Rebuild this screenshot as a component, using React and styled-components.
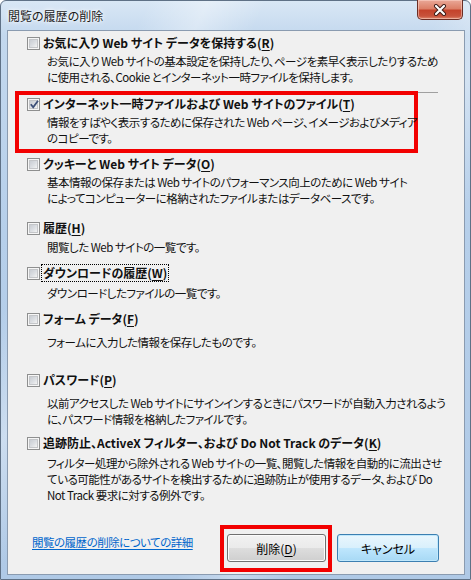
import React from "react";
import styled, { createGlobalStyle } from "styled-components";

const GlobalStyle = createGlobalStyle`
  html, body {
    margin: 0;
    padding: 0;
    width: 471px;
    height: 580px;
    overflow: hidden;
    background: #fff;
  }
  * {
    box-sizing: border-box;
  }
`;

const FONT = `"Noto Sans CJK JP", "Noto Sans", sans-serif`;

const Window = styled.div`
  width: 471px;
  height: 580px;
  display: flex;
  flex-direction: column;
  border: 1px solid #5f7186;
  border-radius: 6px 6px 0 0;
  background:
    linear-gradient(115deg, rgba(255,255,255,0) 20%, rgba(255,255,255,0.35) 28%, rgba(255,255,255,0) 36%, rgba(255,255,255,0) 60%, rgba(255,255,255,0.3) 68%, rgba(255,255,255,0) 76%),
    linear-gradient(180deg, #d9e7f5 0%, #c3d8ee 6%, #b6cfea 40%, #afc9e6 100%);
  font-family: ${FONT};
  font-feature-settings: "palt";
  color: #000;
`;

const TitleBar = styled.div`
  height: 29px;
  display: flex;
  justify-content: space-between;
  align-items: flex-start;
  padding-left: 7px;
  padding-right: 7px;
`;

const Title = styled.div`
  margin-top: 7px;
  font-size: 12px;
  line-height: 16px;
  color: #1a1a1a;
  text-shadow: 0 0 6px #fff, 0 0 3px #fff;
`;

const CloseButton = styled.div`
  width: 46px;
  height: 20px;
  margin-top: -1px;
  border: 1px solid #6b2d24;
  border-top: none;
  border-radius: 0 0 5px 5px;
  background: linear-gradient(180deg, #e9a898 0%, #dc8068 45%, #c4432c 55%, #c8533c 85%, #df8a70 100%);
  box-shadow: inset 0 0 0 1px rgba(255, 220, 210, 0.5);
  display: flex;
  align-items: center;
  justify-content: center;
`;

const Client = styled.div`
  flex: 1;
  margin: 0 5px 4px 6px;
  border: 1px solid #8a9bb0;
  background: #f0f0f0;
  padding-top: 4px;
  display: flex;
  flex-direction: column;
`;

const Item = styled.div`
  margin-top: ${(p) => p.$mt || 0}px;
  padding-left: ${(p) => p.$indent}px;
`;

const LabelRow = styled.div`
  display: flex;
  align-items: center;
  height: 16px;
  gap: 3px;
`;

const Label = styled.span`
  font-size: 12px;
  line-height: 16px;
  font-weight: 700;
  white-space: nowrap;
  padding: 0 1px;
  margin-left: -1px;
  color: #111;
  outline: ${(p) => (p.$focus ? "1px dotted #000" : "none")};
  outline-offset: 0px;
`;

const Key = styled.u`
  text-underline-offset: 2px;
`;

const Desc = styled.div`
  margin-top: ${(p) => p.$mt || 2}px;
  padding-left: 20px;
  font-size: 11.5px;
  letter-spacing: -0.5px;
  line-height: 16px;
  white-space: nowrap;
  color: #111;
`;

const BoxWrap = styled.div`
  width: 13px;
  height: 13px;
  flex: none;
  border: 1px solid #8e8f8f;
  background: #f6f6f6;
  padding: 1px;
`;

const BoxInner = styled.div`
  width: 100%;
  height: 100%;
  border: 1px solid #c4c6c9;
  background: linear-gradient(135deg, #c9cdd3 0%, #dcdfe3 55%, #f3f3f3 100%);
  position: relative;
`;

const Separator = styled.div`
  margin-top: 7px;
  margin-left: 12px;
  width: 418px;
  height: 1px;
  background: #a0a0a0;
`;

const Highlight = styled.div`
  margin-top: ${(p) => p.$mt || 0}px;
  margin-left: ${(p) => p.$ml || 0}px;
  border: 4px solid #f20000;
  padding: ${(p) => p.$pad};
  width: ${(p) => p.$w}px;
`;

const Footer = styled.div`
  margin-top: 22px;
  display: flex;
  align-items: flex-start;
  padding-left: 24px;
  padding-right: 25px;
`;

const HelpLink = styled.a`
  margin-top: 9px;
  font-size: 11.5px;
  letter-spacing: -0.5px;
  line-height: 16px;
  color: #0066cc;
  text-decoration: underline;
  text-underline-offset: 2px;
  cursor: pointer;
  white-space: nowrap;
`;

const Buttons = styled.div`
  margin-left: auto;
  display: flex;
  align-items: flex-start;
  gap: 5px;
`;

const Button = styled.button`
  width: ${(p) => p.$w}px;
  height: 28px;
  margin-top: ${(p) => p.$mt || 0}px;
  border: 1px solid ${(p) => (p.$primary ? "#3c7fb1" : "#707070")};
  border-radius: 3px;
  font-family: ${FONT};
  font-feature-settings: "palt";
  font-size: 12px;
  color: #000;
  padding: 0;
  box-shadow: inset 0 0 0 1px ${(p) => (p.$primary ? "#c0e8fc" : "#fcfcfc")};
  background: ${(p) =>
    p.$primary
      ? "linear-gradient(180deg, #eaf6fd 0%, #d9f0fc 48%, #bee6fd 52%, #a7d9f5 100%)"
      : "linear-gradient(180deg, #f2f2f2 0%, #ebebeb 48%, #dddddd 52%, #cfcfcf 100%)"};
`;

function Checkbox({ checked }) {
  return (
    <BoxWrap>
      <BoxInner>
        {checked && (
          <svg
            width="11"
            height="11"
            viewBox="0 0 11 11"
            style={{ position: "absolute", left: -1, top: -2 }}
          >
            <path
              d="M1.8 5.3 L4.2 8.3 L9 1.8"
              fill="none"
              stroke="#3d4f78"
              strokeWidth="1.8"
            />
          </svg>
        )}
      </BoxInner>
    </BoxWrap>
  );
}

function Option({ label, k, desc, checked, focus, mt, dmt, indent = 19 }) {
  const [before] = label.split(`(${k})`);
  return (
    <Item $mt={mt} $indent={indent}>
      <LabelRow>
        <Checkbox checked={checked} />
        <Label $focus={focus}>
          {before}(<Key>{k}</Key>)
        </Label>
      </LabelRow>
      <Desc $mt={dmt}>
        {desc.map((line, i) => (
          <div key={i}>{line}</div>
        ))}
      </Desc>
    </Item>
  );
}

export default function App() {
  return (
    <>
      <GlobalStyle />
      <Window>
        <TitleBar>
          <Title>閲覧の履歴の削除</Title>
          <CloseButton>
            <svg width="14" height="12" viewBox="0 0 14 12">
              <path
                d="M3 2 L11 10 M11 2 L3 10"
                stroke="#3a1a16"
                strokeWidth="4"
                strokeLinecap="round"
              />
              <path
                d="M3 2 L11 10 M11 2 L3 10"
                stroke="#ffffff"
                strokeWidth="2.2"
                strokeLinecap="round"
              />
            </svg>
          </CloseButton>
        </TitleBar>
        <Client>
          <Option
            label="お気に入り Web サイト データを保持する(R)"
            k="R"
            dmt={2}
            desc={[
              "お気に入り Web サイトの基本設定を保持したり、ページを素早く表示したりするため",
              "に使用される、Cookie とインターネット一時ファイルを保持します。",
            ]}
          />
          <Separator />
          <Highlight $mt={-2} $ml={7} $w={403} $pad="1px 0 3px 0">
            <Option
              indent={8}
              checked
              label="インターネット一時ファイルおよび Web サイトのファイル(T)"
              k="T"
              dmt={2}
              desc={[
                "情報をすばやく表示するために保存された Web ページ、イメージおよびメディア",
                "のコピーです。",
              ]}
            />
          </Highlight>
          <Option
            mt={3}
            label="クッキーと Web サイト データ(O)"
            k="O"
            dmt={2}
            desc={[
              "基本情報の保存または Web サイトのパフォーマンス向上のために Web サイト",
              "によってコンピューターに格納されたファイルまたはデータベースです。",
            ]}
          />
          <Option
            mt={14}
            label="履歴(H)"
            k="H"
            dmt={3}
            desc={["閲覧した Web サイトの一覧です。"]}
          />
          <Option
            mt={10}
            focus
            label="ダウンロードの履歴(W)"
            k="W"
            dmt={4}
            desc={["ダウンロードしたファイルの一覧です。"]}
          />
          <Option
            mt={10}
            label="フォーム データ(F)"
            k="F"
            dmt={7}
            desc={["フォームに入力した情報を保存したものです。"]}
          />
          <Option
            mt={22}
            label="パスワード(P)"
            k="P"
            dmt={7}
            desc={[
              "以前アクセスした Web サイトにサインインするときにパスワードが自動入力されるよう",
              "に、パスワード情報を格納したファイルです。",
            ]}
          />
          <Option
            mt={8}
            label="追跡防止、ActiveX フィルター、および Do Not Track のデータ(K)"
            k="K"
            dmt={4}
            desc={[
              "フィルター処理から除外される Web サイトの一覧、閲覧した情報を自動的に流出させ",
              "ている可能性があるサイトを検出するために追跡防止が使用するデータ、および Do",
              "Not Track 要求に対する例外です。",
            ]}
          />
          <Footer>
            <HelpLink>閲覧の履歴の削除についての詳細</HelpLink>
            <Buttons>
              <Highlight $w={112} $pad="5px 2px 6px 3px">
                <Button $w={99}>
                  削除(<Key>D</Key>)
                </Button>
              </Highlight>
              <Button $primary $w={102} $mt={9}>
                キャンセル
              </Button>
            </Buttons>
          </Footer>
        </Client>
      </Window>
    </>
  );
}
